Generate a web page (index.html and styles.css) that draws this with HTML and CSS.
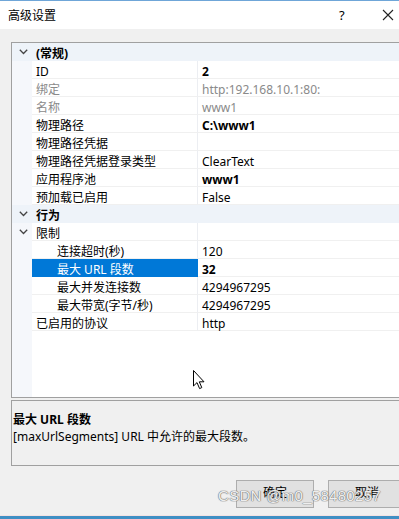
FILE: index.html
```html
<!DOCTYPE html>
<html lang="zh-CN">
<head>
<meta charset="utf-8">
<title>高级设置</title>
<link rel="stylesheet" href="styles.css">
</head>
<body>
<div class="window">
  <div class="topline"></div>
  <div class="titlebar">
    <span class="title">高级设置</span>
    <span class="help">?</span>
    <span class="close"><svg width="12" height="12" viewBox="0 0 12 12"><path d="M1 1L11 11M11 1L1 11" stroke="#222" stroke-width="1.1" fill="none"/></svg></span>
  </div>
  <div class="content">
    <div class="grid">
      <div class="row cat"><span class="gut"><svg class="chev" width="9" height="6" viewBox="0 0 9 6"><path d="M0.8 0.8L4.5 4.5L8.2 0.8" stroke="#444" stroke-width="1.3" fill="none"/></svg></span><span class="name b">(常规)</span><span class="val"></span></div>
      <div class="row"><span class="gut"></span><span class="name">ID</span><span class="val b">2</span></div>
      <div class="row dim"><span class="gut"></span><span class="name">绑定</span><span class="val">http:192.168.10.1:80:</span></div>
      <div class="row dim"><span class="gut"></span><span class="name">名称</span><span class="val">www1</span></div>
      <div class="row"><span class="gut"></span><span class="name">物理路径</span><span class="val b">C:\www1</span></div>
      <div class="row"><span class="gut"></span><span class="name">物理路径凭据</span><span class="val"></span></div>
      <div class="row"><span class="gut"></span><span class="name">物理路径凭据登录类型</span><span class="val">ClearText</span></div>
      <div class="row"><span class="gut"></span><span class="name">应用程序池</span><span class="val b">www1</span></div>
      <div class="row"><span class="gut"></span><span class="name">预加载已启用</span><span class="val">False</span></div>
      <div class="row cat"><span class="gut"><svg class="chev" width="9" height="6" viewBox="0 0 9 6"><path d="M0.8 0.8L4.5 4.5L8.2 0.8" stroke="#444" stroke-width="1.3" fill="none"/></svg></span><span class="name b">行为</span><span class="val"></span></div>
      <div class="row"><span class="gut"><svg class="chev" width="9" height="6" viewBox="0 0 9 6"><path d="M0.8 0.8L4.5 4.5L8.2 0.8" stroke="#444" stroke-width="1.3" fill="none"/></svg></span><span class="name">限制</span><span class="val"></span></div>
      <div class="row"><span class="gut"></span><span class="name sub">连接超时(秒)</span><span class="val">120</span></div>
      <div class="row sel"><span class="gut"></span><span class="name sub">最大 URL 段数</span><span class="val b">32</span></div>
      <div class="row"><span class="gut"></span><span class="name sub">最大并发连接数</span><span class="val">4294967295</span></div>
      <div class="row"><span class="gut"></span><span class="name sub">最大带宽(字节/秒)</span><span class="val">4294967295</span></div>
      <div class="row"><span class="gut"></span><span class="name">已启用的协议</span><span class="val">http</span></div>
      <div class="rest"><span class="gut"></span></div>
    </div>
    <div class="desc">
      <div class="desc-title">最大 URL 段数</div>
      <div class="desc-text">[maxUrlSegments] URL 中允许的最大段数。</div>
    </div>
    <div class="buttons">
      <button class="btn">确定</button>
      <button class="btn">取消</button>
    </div>
  </div>
  <div class="bottomline"></div>
  <svg class="cursor" width="12" height="20" viewBox="0 0 12 20"><path d="M0.5 0.5L0.5 16L4 12.6L6.6 18.6L8.8 17.6L6.3 11.8L11 11.8Z" fill="#fff" stroke="#000" stroke-width="1" stroke-linejoin="miter"/></svg>
  <div class="watermark">CSDN @m0_58480257</div>
</div>
</body>
</html>
```
FILE: styles.css
```css
* { box-sizing: border-box; }
html, body { margin: 0; padding: 0; }
body {
  width: 399px;
  height: 519px;
  overflow: hidden;
  background: #f0f0f0;
  font-family: "Noto Sans", "Noto Sans CJK SC", sans-serif;
  font-size: 12px;
  color: #000;
}
.window {
  position: relative;
  width: 399px;
  height: 519px;
  display: flex;
  flex-direction: column;
}
.topline { height: 1px; background: #6fa6d8; }
.titlebar {
  height: 29px;
  background: #fff;
  display: flex;
  align-items: center;
  padding-left: 8px;
}
.title { font-size: 12px; flex: 1; }
.help { width: 12px; margin-right: 31px; font-size: 13px; }
.close { width: 12px; margin-right: 5px; display: flex; }
.content {
  flex: 1;
  display: flex;
  flex-direction: column;
  padding-left: 11px;
  padding-top: 13px;
}
.grid {
  width: 400px;
  height: 356px;
  border: 1px solid #a0a0a0;
  border-right: none;
  background: #fff;
  display: flex;
  flex-direction: column;
}
.row {
  height: 18px;
  display: flex;
}
.gut {
  width: 20px;
  flex: none;
  background: #f5f7fb;
  display: flex;
  align-items: center;
  justify-content: center;
}
.chev { margin-left: 3px; }
.name {
  width: 166px;
  flex: none;
  padding: 2px 0 0 4px;
  line-height: 17px;
  border-bottom: 1px solid #f0f0f0;
  border-right: 1px solid #eceef2;
  white-space: nowrap;
}
.name.sub { padding-left: 25px; }
.val {
  flex: 1;
  padding: 2px 0 0 4px;
  line-height: 17px;
  border-bottom: 1px solid #f0f0f0;
  white-space: nowrap;
}
.b { font-weight: bold; }
.cat .name, .cat .val { background: #eef3f9; border-bottom-color: #eef3f9; border-right-color: #eef3f9; }
.cat .gut { background: #eef3f9; }
.dim .name, .dim .val { color: #8a8a8a; }
.sel .name { background: #0078d7; color: #fff; border-bottom-color: #0078d7; border-right-color: #0078d7; }
.rest { flex: 1; display: flex; }
.desc {
  margin-top: 2px;
  width: 400px;
  height: 66px;
  border: 1px solid #a0a0a0;
  border-right: none;
  padding: 10px 0 0 1px;
  line-height: 17px;
}
.desc-title { font-weight: bold; }
.buttons {
  display: flex;
  justify-content: flex-end;
  gap: 14px;
  margin-top: 14px;
  margin-right: -7px;
}
.btn {
  width: 78px;
  height: 28px;
  background: #e1e1e1;
  border: 1px solid #adadad;
  font-family: "Noto Sans", "Noto Sans CJK SC", sans-serif;
  font-size: 12px;
  line-height: 16px;
  padding: 0 0 3px 0;
  color: #000;
}
.bottomline {
  height: 4px;
  border-top: 1px solid #f3e3e3;
  background: #3f8fc4;
  margin-top: 7px;
}
.cursor { position: absolute; left: 193px; top: 370px; }
.watermark {
  position: absolute;
  left: 218px;
  top: 487px;
  font-family: "Liberation Sans", sans-serif;
  font-size: 15px;
  color: rgba(255,255,255,0.9);
  text-shadow: 0 0 1px #777, 0 0 1px #777, 0 0 1px #777;
  letter-spacing: 0.3px;
}
```
